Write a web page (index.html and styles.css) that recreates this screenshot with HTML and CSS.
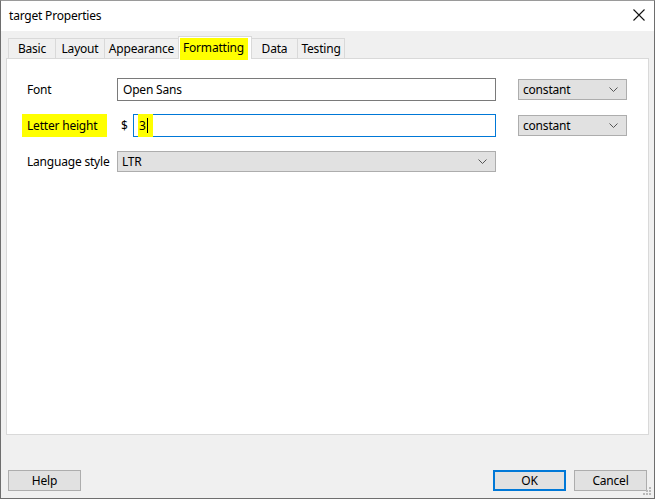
FILE: index.html
```html
<!DOCTYPE html>
<html>
<head>
<meta charset="utf-8">
<link rel="stylesheet" href="styles.css">
</head>
<body>
<div class="window">
  <div class="titlebar">
    <span class="title">target Properties</span>
    <svg class="close" width="12" height="12" viewBox="0 0 12 12"><path d="M0.5 0.5 L11.5 11.5 M11.5 0.5 L0.5 11.5" stroke="#111" stroke-width="1.1" fill="none"/></svg>
  </div>
  <div class="content">
    <div class="tabs">
      <div class="tab w-basic">Basic</div>
      <div class="tab w-layout">Layout</div>
      <div class="tab w-appear">Appearance</div>
      <div class="tab w-format selected"><span class="hl hl-tab">Formatting</span></div>
      <div class="tab w-data">Data</div>
      <div class="tab w-test">Testing</div>
    </div>
    <div class="panel">
      <div class="form">
        <div class="label">Font</div>
        <div class="textbox">Open Sans</div>
        <div class="combo small"><span>constant</span><svg class="chev" width="9" height="5" viewBox="0 0 9 5"><path d="M0.5 0.5 L4.5 4.5 L8.5 0.5" stroke="#555" fill="none"/></svg></div>

        <div class="label"><span class="hl hl-label">Letter height</span></div>
        <div class="exprcell">
          <span class="dollar">$</span>
          <div class="textbox focused"><span class="hl hl-val">3</span><span class="caret"></span></div>
        </div>
        <div class="combo small"><span>constant</span><svg class="chev" width="9" height="5" viewBox="0 0 9 5"><path d="M0.5 0.5 L4.5 4.5 L8.5 0.5" stroke="#555" fill="none"/></svg></div>

        <div class="label">Language style</div>
        <div class="combo wide"><span>LTR</span><svg class="chev" width="9" height="5" viewBox="0 0 9 5"><path d="M0.5 0.5 L4.5 4.5 L8.5 0.5" stroke="#555" fill="none"/></svg></div>
      </div>
    </div>
    <div class="footer">
      <button class="btn">Help</button>
      <div class="spacer"></div>
      <button class="btn default">OK</button>
      <button class="btn">Cancel</button>
    </div>
  </div>
  <svg class="grip" width="9" height="9" viewBox="0 0 9 9"><g fill="#b8b8b8"><rect x="6" y="0" width="2" height="2"/><rect x="3" y="3" width="2" height="2"/><rect x="6" y="3" width="2" height="2"/><rect x="0" y="6" width="2" height="2"/><rect x="3" y="6" width="2" height="2"/><rect x="6" y="6" width="2" height="2"/></g></svg>
</div>
</body>
</html>
```
FILE: styles.css
```css
html, body {
  margin: 0;
  padding: 0;
}
body {
  font-family: "Noto Sans", "Liberation Sans", sans-serif;
  font-size: 12px;
  letter-spacing: -0.2px;
  color: #000;
}
.window {
  position: relative;
  width: 655px;
  height: 499px;
  box-sizing: border-box;
  border: 1px solid #6e6e6e;
  border-top-color: #9a9a9a;
  background: #f0f0f0;
  display: flex;
  flex-direction: column;
}
.titlebar {
  height: 30px;
  background: #fff;
  display: flex;
  align-items: center;
  padding: 0 9px 0 8px;
  flex: none;
}
.title {
  flex: 1;
  font-size: 12px;
  margin-top: -1px;
}
.close {
  margin-top: -2px;
}
.content {
  flex: 1;
  display: flex;
  flex-direction: column;
  padding: 0 5px;
}
.tabs {
  display: flex;
  height: 27px;
  padding-left: 2px;
  align-items: flex-end;
  position: relative;
  z-index: 2;
}
.tab {
  height: 20px;
  box-sizing: border-box;
  border: 1px solid #d9d9d9;
  border-bottom: none;
  margin-right: -1px;
  background: #f0f0f0;
  display: flex;
  align-items: center;
  justify-content: center;
  line-height: 16px;
  flex: none;
}
.tab.selected {
  height: 23px;
  margin-bottom: -1px;
  background: #fff;
  position: relative;
  z-index: 3;
  align-items: flex-start;
  padding-top: 1px;
}
.w-basic { width: 48px; }
.w-layout { width: 50px; }
.w-appear { width: 75px; }
.w-format { width: 74px; }
.w-data { width: 47px; }
.w-test { width: 48px; }
.hl {
  background: #ffff00;
}
.hl-tab {
  padding: 2px 4px 4px 3px;
  margin-left: -2px;
}
.hl-label {
  padding: 3px 10px 3px 5px;
  margin-left: -5px;
}
.hl-val {
  padding: 3px 7px 3px 1px;
  margin-left: -1px;
}
.panel {
  height: 377px;
  box-sizing: border-box;
  border: 1px solid #d9d9d9;
  background: #fff;
  padding: 19px 0 0 20px;
  position: relative;
  z-index: 1;
}
.form {
  display: grid;
  grid-template-columns: 90px 379px 131px;
  grid-auto-rows: 23px;
  column-gap: 0;
  row-gap: 13px;
  align-items: center;
}
.label {
  white-space: nowrap;
}
.textbox {
  height: 23px;
  box-sizing: border-box;
  border: 1px solid #7a7a7a;
  background: #fff;
  padding: 0 5px;
  display: flex;
  align-items: center;
}
.textbox.focused {
  border-color: #0078d7;
  flex: 1;
}
.caret {
  display: inline-block;
  width: 1px;
  height: 15px;
  background: #000;
  margin-left: -6px;
}
.exprcell {
  display: flex;
  align-items: center;
  height: 23px;
}
.dollar {
  width: 16px;
  padding-left: 4px;
  box-sizing: border-box;
  flex: none;
}
.combo {
  height: 21px;
  box-sizing: border-box;
  border: 1px solid #adadad;
  background: #e1e1e1;
  display: flex;
  align-items: center;
  padding: 0 8px 0 4px;
}
.combo.small {
  margin-left: 22px;
}
.combo span {
  flex: 1;
}
.chev {
  display: block;
}
.footer {
  display: flex;
  margin-top: 35px;
  padding: 0 2px;
}
.spacer {
  flex: 1;
}
.btn {
  flex: none;
  width: 73px;
  height: 21px;
  box-sizing: border-box;
  border: 1px solid #adadad;
  background: #e1e1e1;
  font-family: "Noto Sans", "Liberation Sans", sans-serif;
  font-size: 12px;
  letter-spacing: -0.2px;
  color: #000;
  padding: 0;
  margin: 0;
}
.btn.default {
  border: 2px solid #0078d7;
  margin-right: 8px;
}
.grip {
  position: absolute;
  right: 2px;
  bottom: 2px;
}
```
